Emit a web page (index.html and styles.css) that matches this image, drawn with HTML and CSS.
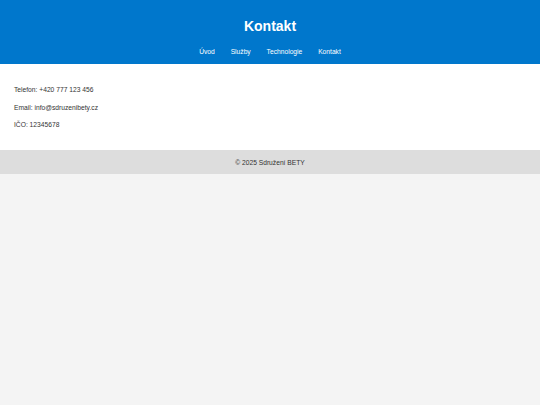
FILE: index.html
```html
<!DOCTYPE html>
<html lang="cs">
<head>
    <meta charset="UTF-8">
    <meta name="viewport" content="width=device-width, initial-scale=1.0">
    <title>Kontakt</title>
    <link rel="stylesheet" href="styles.css">
</head>
<body>
    <!-- Blue header with nav -->
    <header class="site-header">
        <h1>Kontakt</h1>
        <nav class="main-nav">
            <a href="#">Úvod</a>
            <a href="#">Služby</a>
            <a href="#">Technologie</a>
            <a href="#">Kontakt</a>
        </nav>
    </header>

    <main class="content">
        <p>Telefon: +420 777 123 456</p>
        <p>Email: info@sdruzenibety.cz</p>
        <p>IČO: 12345678</p>
    </main>

    <footer class="site-footer">
        <p>© 2025 Sdružení BETY</p>
    </footer>
</body>
</html>
```
FILE: styles.css
```css
body {
    font-family: "Liberation Sans", Arial, sans-serif;
    margin: 0;
    padding: 0;
    background-color: #f4f4f4;
    color: #333;
}

/* Header */
.site-header {
    background-color: #0077cc;
    color: white;
    text-align: center;
    height: 64px;
    box-sizing: border-box;
    padding-top: 17px;
}

.site-header h1 {
    margin: 0;
    font-size: 14px;
    line-height: 18px;
}

.main-nav {
    margin-top: 13px;
    font-size: 6.7px;
    line-height: 8px;
}

.main-nav a {
    color: white;
    text-decoration: none;
    margin: 0 7px;
}

/* Content */
.content {
    background-color: white;
    padding: 22px 14px 21px;
}

.content p {
    margin: 0 0 9.5px;
    font-size: 6.7px;
    line-height: 8px;
}

.content p:last-child {
    margin-bottom: 0;
}

/* Footer */
.site-footer {
    background-color: #ddd;
    text-align: center;
    height: 24px;
    display: flex;
    align-items: center;
    justify-content: center;
}

.site-footer p {
    margin: 0;
    font-size: 6.7px;
}
```
